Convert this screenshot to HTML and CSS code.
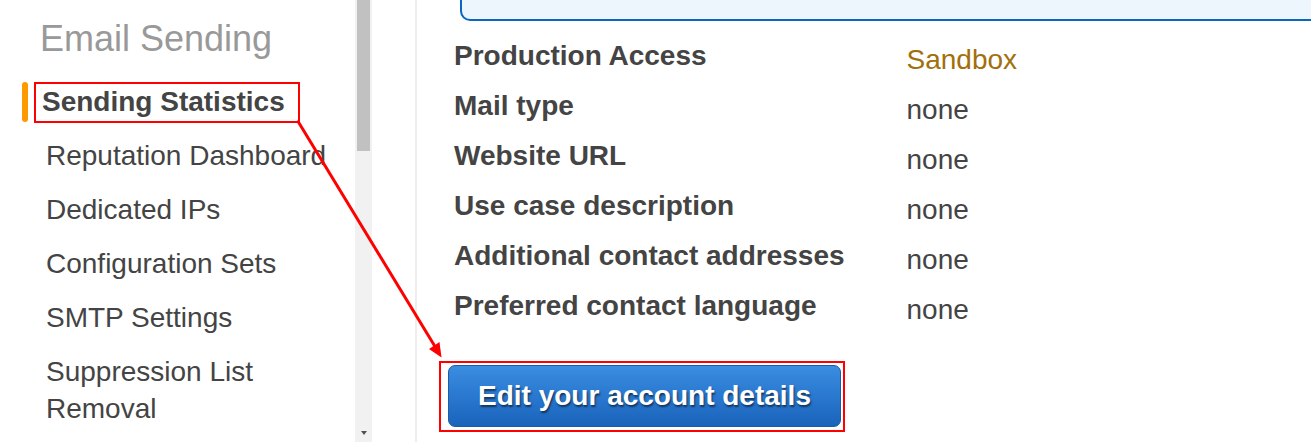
FILE: index.html
```html
<!DOCTYPE html>
<html lang="en">
<head>
<meta charset="utf-8">
<title>Email Sending</title>
<link rel="stylesheet" href="styles.css">
</head>
<body>
<div class="page">
  <aside class="sidebar">
    <nav class="nav">
      <h2 class="nav-title">Email Sending</h2>
      <ul class="nav-list">
        <li class="nav-item active">Sending Statistics</li>
        <li class="nav-item">Reputation Dashboard</li>
        <li class="nav-item">Dedicated IPs</li>
        <li class="nav-item">Configuration Sets</li>
        <li class="nav-item">SMTP Settings</li>
        <li class="nav-item">Suppression List Removal</li>
      </ul>
    </nav>
    <div class="scrollbar">
      <div class="scroll-thumb"></div>
      <div class="scroll-arrow"></div>
    </div>
  </aside>
  <div class="divider"></div>
  <main class="main">
    <div class="notice"></div>
    <dl class="details">
      <dt>Production Access</dt><dd class="sandbox">Sandbox</dd>
      <dt>Mail type</dt><dd>none</dd>
      <dt>Website URL</dt><dd>none</dd>
      <dt>Use case description</dt><dd>none</dd>
      <dt>Additional contact addresses</dt><dd>none</dd>
      <dt>Preferred contact language</dt><dd>none</dd>
    </dl>
    <div class="btn-frame">
      <button class="btn" type="button">Edit your account details</button>
    </div>
  </main>
  <svg class="annotation" width="1311" height="447" viewBox="0 0 1311 447" aria-hidden="true">
    <line x1="297.5" y1="120.5" x2="435" y2="346.5" stroke="#ff0000" stroke-width="3"/>
    <polygon points="441.5,357.5 429,349 439.5,342" fill="#ff0000"/>
  </svg>
</div>
</body>
</html>
```

FILE: styles.css
```css
html, body {
  margin: 0;
  padding: 0;
  background: #ffffff;
}

body {
  width: 1311px;
  height: 447px;
  overflow: hidden;
  font-family: "Liberation Sans", Arial, sans-serif;
  color: #444444;
}

.page {
  position: relative;
  display: flex;
  height: 442px;
}

/* ---------- Sidebar ---------- */
.sidebar {
  display: flex;
  flex: none;
  width: 372px;
  height: 100%;
}

.nav {
  width: 355px;
  flex: none;
  padding-top: 18.5px;
  box-sizing: border-box;
}

.nav-title {
  margin: 0 0 23.5px 0;
  padding-left: 40px;
  font-size: 36px;
  line-height: 40px;
  font-weight: normal;
  color: #999999;
}

.nav-list {
  list-style: none;
  margin: 0;
  padding: 0 0 0 34px;
  display: flex;
  flex-direction: column;
  align-items: flex-start;
  gap: 13.5px;
}

.nav-item {
  position: relative;
  max-width: 321px;
  box-sizing: border-box;
  border: 2px solid transparent;
  padding: 0 0 0 10px;
  font-size: 28px;
  line-height: 36.5px;
  color: #444444;
}

.nav-item.active {
  border-color: #ff0000;
  padding: 0 13px 0 6px;
  font-weight: bold;
}

.nav-item.active::before {
  content: "";
  position: absolute;
  left: -14px;
  top: -2px;
  width: 6px;
  height: 40px;
  border-radius: 3px;
  background: #ff9900;
}

.scrollbar {
  width: 17px;
  flex: none;
  height: 100%;
  background: #f1f1f1;
  display: flex;
  flex-direction: column;
  justify-content: space-between;
  align-items: center;
}

.scroll-thumb {
  width: 13px;
  height: 151px;
  background: #c1c1c1;
}

.scroll-arrow {
  width: 0;
  height: 0;
  border-left: 3.5px solid transparent;
  border-right: 3.5px solid transparent;
  border-top: 4px solid #505050;
  margin-bottom: 7px;
}

.divider {
  flex: none;
  width: 2px;
  height: 100%;
  margin-left: 43px;
  background: #eeeeee;
}

/* ---------- Main ---------- */
.main {
  flex: 1;
  min-width: 0;
  padding-left: 22px;
  overflow: hidden;
}

.notice {
  height: 19px;
  margin-left: 21px;
  margin-right: -20px;
  border: 2px solid #0a67bd;
  border-top: 0;
  border-bottom-left-radius: 10px;
  background: #eef6fd;
}

.details {
  display: grid;
  grid-template-columns: 452.5px 1fr;
  grid-auto-rows: 50px;
  margin: 10.3px 0 0 15px;
  font-size: 28px;
}

.details dt {
  font-weight: bold;
  line-height: 50px;
  color: #444444;
  white-space: nowrap;
}

.details dd {
  margin: 0;
  padding-top: 8px;
  line-height: 42px;
  color: #444444;
}

.details dd.sandbox {
  color: #a2700b;
}

.btn-frame {
  display: inline-block;
  margin-top: 29.7px;
  border: 2px solid #ff0000;
  padding: 2px 2px 3px 7px;
}

.btn {
  display: block;
  width: 393px;
  height: 62px;
  margin: 0;
  padding: 0;
  border: 1px solid #1b5ba8;
  border-radius: 7px;
  background: linear-gradient(to bottom, #3a8de0 0%, #2a78d0 50%, #1a63ba 100%);
  color: #ffffff;
  font-family: "Liberation Sans", Arial, sans-serif;
  font-size: 28px;
  font-weight: bold;
  line-height: 60px;
  text-align: center;
  text-shadow: 1px 2px 2px rgba(0, 0, 0, 0.55);
  cursor: pointer;
}

/* ---------- Annotation overlay ---------- */
.annotation {
  position: absolute;
  left: 0;
  top: 0;
  pointer-events: none;
}
```
